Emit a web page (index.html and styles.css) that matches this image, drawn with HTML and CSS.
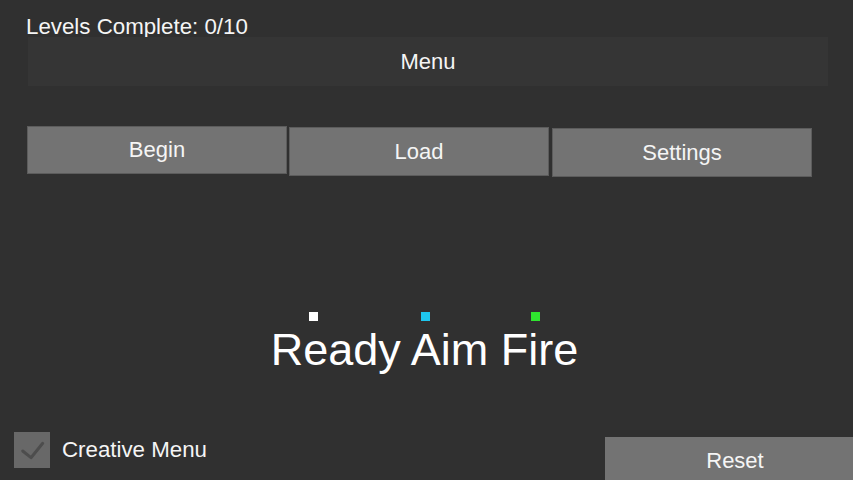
FILE: index.html
```html
<!DOCTYPE html>
<html lang="en">
<head>
    <meta charset="UTF-8">
    <meta name="viewport" content="width=device-width, initial-scale=1.0">
    <title>Ready Aim Fire</title>
    <link rel="stylesheet" href="styles.css">
</head>
<body>
    <div class="screen">
        <div class="levels">Levels Complete: 0/10</div>

        <div class="menu-bar">Menu</div>

        <div class="actions">
            <button class="btn">Begin</button>
            <button class="btn btn-load">Load</button>
            <button class="btn btn-settings">Settings</button>
        </div>

        <div class="title-block">
            <div class="markers">
                <span class="marker marker-white"></span>
                <span class="marker marker-cyan"></span>
                <span class="marker marker-green"></span>
            </div>
            <h1 class="title">Ready Aim Fire</h1>
        </div>

        <div class="footer">
            <label class="creative">
                <span class="checkbox">
                    <svg width="36" height="36" viewBox="0 0 36 36">
                        <path d="M8.7 19 L17 25.7 L28.7 11.3" fill="none" stroke="#4d4d4d" stroke-width="3" stroke-linecap="round" stroke-linejoin="round"/>
                    </svg>
                </span>
                Creative Menu
            </label>
            <button class="btn btn-reset">Reset</button>
        </div>
    </div>
</body>
</html>
```

FILE: styles.css
```css
* {
    margin: 0;
    padding: 0;
    box-sizing: border-box;
    font-family: 'Liberation Sans', Arial, sans-serif;
}

body {
    background-color: #303030;
    color: #f5f5f5;
    overflow: hidden;
}

.screen {
    display: flex;
    flex-direction: column;
    width: 853px;
    height: 480px;
    overflow: hidden;
}

.levels {
    padding: 16px 0 0 26px;
    font-size: 22.3px;
    line-height: 21px;
}

.menu-bar {
    margin-left: 28px;
    width: 800px;
    height: 49px;
    line-height: 49px;
    background-color: #353535;
    text-align: center;
    font-size: 22px;
}

.actions {
    display: flex;
    align-items: flex-start;
    margin: 40px 0 0 27px;
}

.btn {
    width: 260px;
    height: 48px;
    background-color: #737373;
    color: #f5f5f5;
    border: 1px solid #5c5c5c;
    font-size: 22px;
    cursor: pointer;
}

.btn-load {
    height: 49px;
    margin: 1px 0 0 2px;
}

.btn-settings {
    height: 49px;
    margin: 2px 0 0 3px;
}

.title-block {
    align-self: center;
    margin: 135px 4px 0 0;
}

.markers {
    display: flex;
    height: 9px;
    margin-bottom: 4px;
}

.marker {
    width: 9px;
    height: 9px;
}

.marker-white {
    background-color: #ffffff;
    margin-left: 38px;
}

.marker-cyan {
    background-color: #1ec6ee;
    margin-left: 103px;
}

.marker-green {
    background-color: #2fe52f;
    margin-left: 101px;
}

.title {
    font-size: 45px;
    font-weight: normal;
    line-height: 50px;
    color: #ffffff;
}

.footer {
    display: flex;
    justify-content: space-between;
    align-items: flex-start;
    margin-top: 57px;
}

.creative {
    display: flex;
    align-items: center;
    gap: 12px;
    margin-left: 14px;
    font-size: 22.3px;
}

.checkbox {
    width: 36px;
    height: 36px;
    background-color: #686868;
}

.checkbox svg {
    display: block;
}

.btn-reset {
    margin: 5px -12px 0 0;
    border: none;
}
```
